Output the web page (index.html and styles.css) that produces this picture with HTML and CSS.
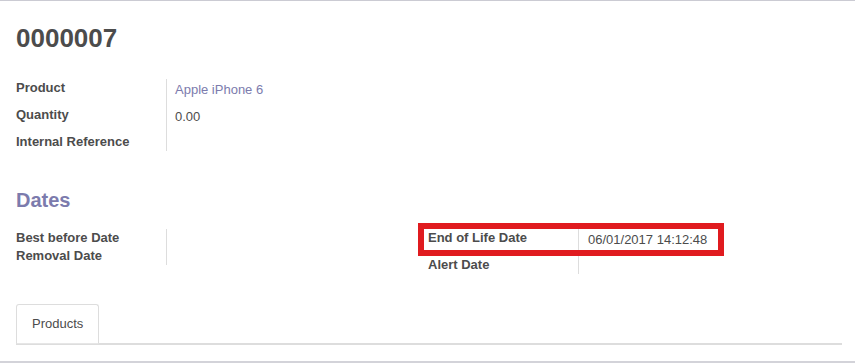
FILE: index.html
```html
<!DOCTYPE html>
<html lang="en">
<head>
    <meta charset="UTF-8">
    <meta name="viewport" content="width=device-width, initial-scale=1.0">
    <link rel="stylesheet" href="styles.css">
</head>
<body>

    <div class="sheet">
        <h1 class="title">0000007</h1>

        <!-- Main info -->
        <div class="group">
            <div class="row">
                <div class="label">Product</div>
                <div class="value"><a href="#" class="link">Apple iPhone 6</a></div>
            </div>
            <div class="row">
                <div class="label">Quantity</div>
                <div class="value">0.00</div>
            </div>
            <div class="row">
                <div class="label">Internal Reference</div>
                <div class="value"></div>
            </div>
        </div>

        <h2 class="separator">Dates</h2>

        <div class="columns">
            <div class="group">
                <div class="row">
                    <div class="label">Best before Date</div>
                    <div class="value"></div>
                </div>
                <div class="row">
                    <div class="label">Removal Date</div>
                    <div class="value"></div>
                </div>
            </div>
            <div class="group">
                <div class="row highlight">
                    <div class="label">End of Life Date</div>
                    <div class="value">06/01/2017 14:12:48</div>
                </div>
                <div class="row">
                    <div class="label">Alert Date</div>
                    <div class="value"></div>
                </div>
            </div>
        </div>

        <!-- Notebook -->
        <div class="notebook">
            <div class="tab">Products</div>
        </div>
    </div>

</body>
</html>
```

FILE: styles.css
```css
body {
    margin: 0;
    font-family: "Liberation Sans", Arial, sans-serif;
    font-size: 13px;
    color: #4c4c4c;
    background: #fff;
}

.sheet {
    border-top: 1px solid #cbcbd3;
    border-bottom: 3px solid #d3d3d9;
    padding: 0 15px 16px 16px;
}

.title {
    margin: 22px 0 26px;
    font-size: 26px;
    line-height: 30px;
    font-weight: bold;
    color: #4c4c4c;
}

.row {
    display: grid;
    grid-template-columns: 151px 1fr;
}

.label {
    line-height: 18px;
    font-weight: bold;
    border-right: 1px solid #ddd;
}

.value {
    line-height: 18px;
    padding: 2px 0 7px 8px;
}

.columns .value {
    padding-left: 9px;
}

.value:empty {
    padding: 0;
}

.link {
    color: #7c7bad;
    text-decoration: none;
}

.separator {
    margin: 37px 0 17px;
    font-size: 20px;
    line-height: 24px;
    font-weight: bold;
    color: #7c7bad;
}

.columns {
    display: grid;
    grid-template-columns: 1fr 1fr;
    align-items: start;
}

.highlight {
    position: relative;
}

.highlight::after {
    content: '';
    position: absolute;
    top: -6px;
    left: -10px;
    width: 306px;
    height: 33px;
    box-sizing: border-box;
    border: 6px solid #e01b1f;
}

.notebook {
    margin: 30px -2px 0 0;
    display: flex;
    border-bottom: 2px solid #ddd;
}

.tab {
    padding: 10px 15px 10px 15px;
    line-height: 18px;
    border: 1px solid #ddd;
    border-bottom: 1px solid #e6e6e6;
    border-radius: 3px 3px 0 0;
    margin-bottom: -1px;
    background: #fff;
}
```
